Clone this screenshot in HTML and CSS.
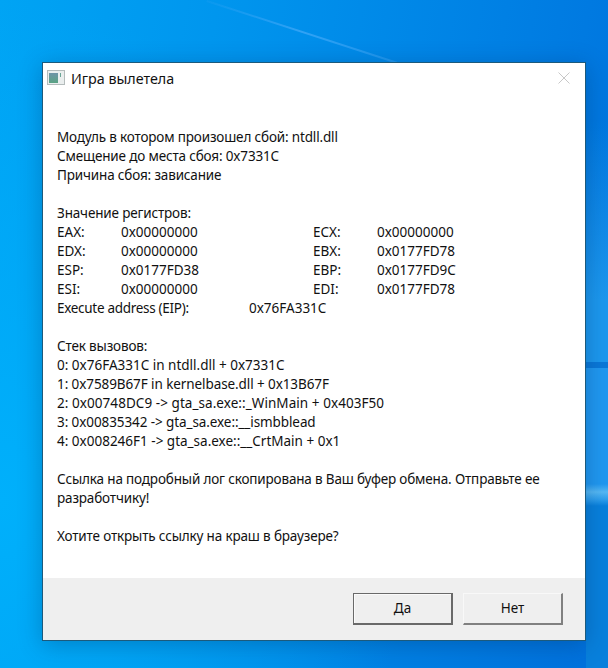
FILE: index.html
```html
<!DOCTYPE html>
<html lang="ru">
<head>
<meta charset="utf-8">
<title>Игра вылетела</title>
<link rel="stylesheet" href="styles.css">
</head>
<body>
<div class="desktop">
  <div class="streak"></div>
  <div class="window">
    <div class="titlebar">
      <svg class="app-icon" width="18" height="16" viewBox="0 0 18 16">
        <defs>
          <linearGradient id="pane" x1="0" y1="0" x2="0" y2="1">
            <stop offset="0" stop-color="#6f94a8"/>
            <stop offset="1" stop-color="#5aa384"/>
          </linearGradient>
        </defs>
        <rect x="0.5" y="0.5" width="17" height="14" fill="#eaeeee" stroke="#b4bcbc"/>
        <rect x="2" y="3" width="9" height="10" fill="url(#pane)"/>
        <rect x="13" y="3" width="1" height="4" fill="#6aa596"/>
      </svg>
      <span class="title">Игра вылетела</span>
      <svg class="close" width="12" height="12" viewBox="0 0 12 12">
        <path d="M0.5 0.5L11.5 11.5M11.5 0.5L0.5 11.5" stroke="#c8c8c8" stroke-width="1" fill="none"/>
      </svg>
    </div>
    <div class="content">
      <p class="ru">Модуль в котором произошел сбой: ntdll.dll</p>
      <p class="ru">Смещение до места сбоя: 0x7331C</p>
      <p class="ru">Причина сбоя: зависание</p>
      <p class="ru gap">Значение регистров:</p>
      <div class="regs">
        <span>EAX:</span><span>0x00000000</span><span>ECX:</span><span>0x00000000</span>
        <span>EDX:</span><span>0x00000000</span><span>EBX:</span><span>0x0177FD78</span>
        <span>ESP:</span><span>0x0177FD38</span><span>EBP:</span><span>0x0177FD9C</span>
        <span>ESI:</span><span>0x00000000</span><span>EDI:</span><span>0x0177FD78</span>
      </div>
      <div class="eip"><span class="eip-label">Execute address (EIP):</span><span>0x76FA331C</span></div>
      <p class="ru gap">Стек вызовов:</p>
      <p>0: 0x76FA331C in ntdll.dll + 0x7331C</p>
      <p class="tight">1: 0x7589B67F in kernelbase.dll + 0x13B67F</p>
      <p class="wide">2: 0x00748DC9 -&gt; gta_sa.exe::_WinMain + 0x403F50</p>
      <p class="tight">3: 0x00835342 -&gt; gta_sa.exe::__ismbblead</p>
      <p>4: 0x008246F1 -&gt; gta_sa.exe::__CrtMain + 0x1</p>
      <p class="ru gap">Ссылка на подробный лог скопирована в Ваш буфер обмена. Отправьте ее разработчику!</p>
      <p class="ru gap">Хотите открыть ссылку на краш в браузере?</p>
    </div>
    <div class="footer">
      <button class="btn default">Да</button>
      <button class="btn">Нет</button>
    </div>
  </div>
</div>
</body>
</html>
```
FILE: styles.css
```css
* { box-sizing: border-box; }
html, body { margin: 0; padding: 0; }
.desktop {
  position: relative;
  width: 608px;
  height: 668px;
  overflow: hidden;
  padding: 62px 0 0 42px;
  background:
    linear-gradient(180deg,
      rgba(32,152,240,0) 120px,
      #1c98ee 300px,
      #1c98ee 362px,
      #0a78d8 362px,
      #0a78d8 368px,
      #2098f0 368px,
      #2098f0 484px,
      #55b8f4 492px,
      #2a9cec 500px,
      #0880dc 506px,
      #0880dc 668px) right top / 22px 100% no-repeat,
    radial-gradient(ellipse 420px 500px at 0% 75%, #00b0fb 0%, rgba(0,176,251,0) 100%),
    linear-gradient(100deg, #00a4f4 0%, #0096ee 30%, #0080e4 70%, #0070dc 100%);
}
.streak {
  position: absolute;
  left: 207px;
  top: 0;
  width: 200px;
  height: 2px;
  background: linear-gradient(90deg, rgba(80,170,245,0.1), rgba(70,170,248,0.7), rgba(70,170,248,0.4));
  transform-origin: 0 0;
  transform: rotate(18deg);
}
.window {
  position: relative;
  width: 544px;
  height: 579px;
  display: flex;
  flex-direction: column;
  background: #fff;
  border: 1px solid #1c5a7c;
  box-shadow: 0 4px 22px rgba(0, 40, 90, 0.3);
  font-family: "Noto Sans", "Open Sans", sans-serif;
  font-size: 13.5px;
  line-height: 19px;
  color: #111;
}
.titlebar {
  display: flex;
  align-items: center;
  height: 30px;
  padding: 0 15px 0 4px;
}
.app-icon { flex: none; margin-right: 6px; }
.title { flex: 1; font-size: 14.3px; }
.close { flex: none; }
.content { flex: 1; padding: 35px 14px 0; }
.content p { margin: 0; }
.content p.gap { margin-top: 19px; }
.content p.ru { letter-spacing: -0.16px; }
.content p.tight { letter-spacing: -0.09px; }
.content p.wide { letter-spacing: 0.06px; }
.regs {
  display: grid;
  grid-template-columns: 64px 192px 64px 1fr;
}
.eip { display: grid; grid-template-columns: 192px 1fr; }
.eip-label { letter-spacing: -0.3px; }
.footer {
  flex: none;
  height: 62px;
  display: flex;
  justify-content: flex-end;
  gap: 10px;
  padding: 15px 22px 0 0;
  background: #efefef;
}
.btn {
  width: 100px;
  height: 32px;
  padding: 0;
  font: inherit;
  color: #111;
  background: #efefef;
  border-style: solid;
  border-width: 1px 2px 2px 1px;
  border-color: #f8f8f8 #808080 #808080 #f8f8f8;
}
.btn.default {
  border-color: #696969;
  border-width: 1px 2px 2px 1px;
  box-shadow: inset 1px 1px 0 #fafafa;
}
```
